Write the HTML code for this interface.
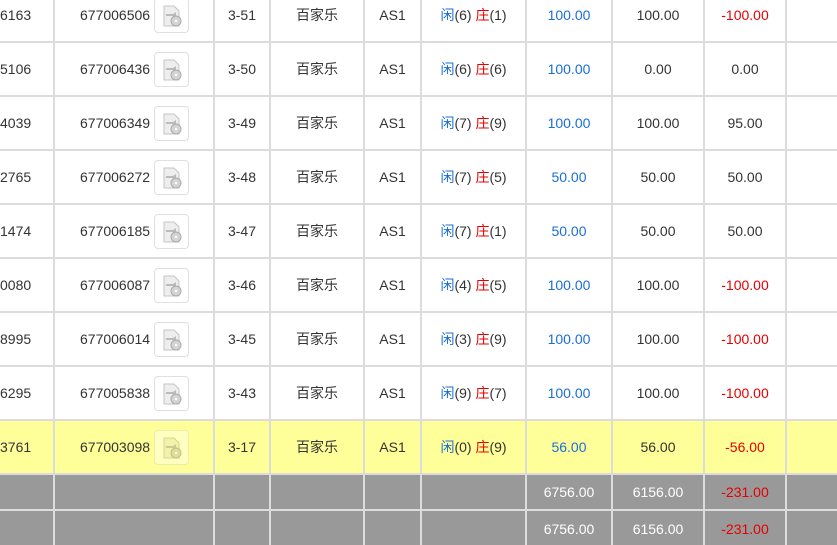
<!DOCTYPE html><html><head><meta charset="utf-8"><style>
body{margin:0;width:837px;height:543px;overflow:hidden;background:#fff;font-family:"Liberation Sans","Noto Sans CJK SC",sans-serif;font-size:14px;color:#333}
.wrap{position:absolute;top:-11px;left:0}
.r{display:flex;height:52px;border-bottom:2px solid #dcdcdc;line-height:52px}
.r>div{border-right:2px solid #dcdcdc;text-align:center;flex:none;white-space:nowrap;overflow:hidden}
.c0{width:53px;text-align:left!important}.c1{width:158px;position:relative}.c2{width:54px}.c3{width:92px}.c4{width:55px}.c5{width:103px}.c6{width:84px}.c7{width:90px}.c8{width:80px}.c9{width:50px;border-right:none!important}
.c1 span{position:absolute;left:25px}
.ic{position:absolute;left:99px;top:9px;width:33px;height:33px;border:1px solid #e0e0e0;border-radius:4px;background:rgba(255,255,255,.4)}
.b{color:#1a6ed8}.d{color:#e60000}
.y{background:#ffff99}
.g{background:#999;color:#fff;height:34px;line-height:34px}
.g2{height:34px;line-height:36px;border-bottom:none}
</style></head><body><div class="wrap">
<div class="r"><div class="c0">6163</div><div class="c1"><span>677006506</span><div class="ic"><svg width="33" height="33"><path d="M9 7h10l5 5v15H9z" fill="#eee" stroke="#c4c4c4"/><path d="M11 15h7l3-2v6l-3-2h-7z" fill="#bbb"/><circle cx="21" cy="22" r="5" fill="#d4d4d4" stroke="#aaa"/><circle cx="21" cy="22" r="1.2" fill="#fff"/></svg></div></div><div class="c2">3-51</div><div class="c3">百家乐</div><div class="c4">AS1</div><div class="c5"><span class="b">闲</span>(6) <span class="d">庄</span>(1)</div><div class="c6 b">100.00</div><div class="c7">100.00</div><div class="c8 d">-100.00</div><div class="c9"></div></div>
<div class="r"><div class="c0">5106</div><div class="c1"><span>677006436</span><div class="ic"><svg width="33" height="33"><path d="M9 7h10l5 5v15H9z" fill="#eee" stroke="#c4c4c4"/><path d="M11 15h7l3-2v6l-3-2h-7z" fill="#bbb"/><circle cx="21" cy="22" r="5" fill="#d4d4d4" stroke="#aaa"/><circle cx="21" cy="22" r="1.2" fill="#fff"/></svg></div></div><div class="c2">3-50</div><div class="c3">百家乐</div><div class="c4">AS1</div><div class="c5"><span class="b">闲</span>(6) <span class="d">庄</span>(6)</div><div class="c6 b">100.00</div><div class="c7">0.00</div><div class="c8">0.00</div><div class="c9"></div></div>
<div class="r"><div class="c0">4039</div><div class="c1"><span>677006349</span><div class="ic"><svg width="33" height="33"><path d="M9 7h10l5 5v15H9z" fill="#eee" stroke="#c4c4c4"/><path d="M11 15h7l3-2v6l-3-2h-7z" fill="#bbb"/><circle cx="21" cy="22" r="5" fill="#d4d4d4" stroke="#aaa"/><circle cx="21" cy="22" r="1.2" fill="#fff"/></svg></div></div><div class="c2">3-49</div><div class="c3">百家乐</div><div class="c4">AS1</div><div class="c5"><span class="b">闲</span>(7) <span class="d">庄</span>(9)</div><div class="c6 b">100.00</div><div class="c7">100.00</div><div class="c8">95.00</div><div class="c9"></div></div>
<div class="r"><div class="c0">2765</div><div class="c1"><span>677006272</span><div class="ic"><svg width="33" height="33"><path d="M9 7h10l5 5v15H9z" fill="#eee" stroke="#c4c4c4"/><path d="M11 15h7l3-2v6l-3-2h-7z" fill="#bbb"/><circle cx="21" cy="22" r="5" fill="#d4d4d4" stroke="#aaa"/><circle cx="21" cy="22" r="1.2" fill="#fff"/></svg></div></div><div class="c2">3-48</div><div class="c3">百家乐</div><div class="c4">AS1</div><div class="c5"><span class="b">闲</span>(7) <span class="d">庄</span>(5)</div><div class="c6 b">50.00</div><div class="c7">50.00</div><div class="c8">50.00</div><div class="c9"></div></div>
<div class="r"><div class="c0">1474</div><div class="c1"><span>677006185</span><div class="ic"><svg width="33" height="33"><path d="M9 7h10l5 5v15H9z" fill="#eee" stroke="#c4c4c4"/><path d="M11 15h7l3-2v6l-3-2h-7z" fill="#bbb"/><circle cx="21" cy="22" r="5" fill="#d4d4d4" stroke="#aaa"/><circle cx="21" cy="22" r="1.2" fill="#fff"/></svg></div></div><div class="c2">3-47</div><div class="c3">百家乐</div><div class="c4">AS1</div><div class="c5"><span class="b">闲</span>(7) <span class="d">庄</span>(1)</div><div class="c6 b">50.00</div><div class="c7">50.00</div><div class="c8">50.00</div><div class="c9"></div></div>
<div class="r"><div class="c0">0080</div><div class="c1"><span>677006087</span><div class="ic"><svg width="33" height="33"><path d="M9 7h10l5 5v15H9z" fill="#eee" stroke="#c4c4c4"/><path d="M11 15h7l3-2v6l-3-2h-7z" fill="#bbb"/><circle cx="21" cy="22" r="5" fill="#d4d4d4" stroke="#aaa"/><circle cx="21" cy="22" r="1.2" fill="#fff"/></svg></div></div><div class="c2">3-46</div><div class="c3">百家乐</div><div class="c4">AS1</div><div class="c5"><span class="b">闲</span>(4) <span class="d">庄</span>(5)</div><div class="c6 b">100.00</div><div class="c7">100.00</div><div class="c8 d">-100.00</div><div class="c9"></div></div>
<div class="r"><div class="c0">8995</div><div class="c1"><span>677006014</span><div class="ic"><svg width="33" height="33"><path d="M9 7h10l5 5v15H9z" fill="#eee" stroke="#c4c4c4"/><path d="M11 15h7l3-2v6l-3-2h-7z" fill="#bbb"/><circle cx="21" cy="22" r="5" fill="#d4d4d4" stroke="#aaa"/><circle cx="21" cy="22" r="1.2" fill="#fff"/></svg></div></div><div class="c2">3-45</div><div class="c3">百家乐</div><div class="c4">AS1</div><div class="c5"><span class="b">闲</span>(3) <span class="d">庄</span>(9)</div><div class="c6 b">100.00</div><div class="c7">100.00</div><div class="c8 d">-100.00</div><div class="c9"></div></div>
<div class="r"><div class="c0">6295</div><div class="c1"><span>677005838</span><div class="ic"><svg width="33" height="33"><path d="M9 7h10l5 5v15H9z" fill="#eee" stroke="#c4c4c4"/><path d="M11 15h7l3-2v6l-3-2h-7z" fill="#bbb"/><circle cx="21" cy="22" r="5" fill="#d4d4d4" stroke="#aaa"/><circle cx="21" cy="22" r="1.2" fill="#fff"/></svg></div></div><div class="c2">3-43</div><div class="c3">百家乐</div><div class="c4">AS1</div><div class="c5"><span class="b">闲</span>(9) <span class="d">庄</span>(7)</div><div class="c6 b">100.00</div><div class="c7">100.00</div><div class="c8 d">-100.00</div><div class="c9"></div></div>
<div class="r y"><div class="c0">3761</div><div class="c1"><span>677003098</span><div class="ic" style="border-color:#eeeeaa"><svg width="33" height="33"><path d="M9 7h10l5 5v15H9z" fill="#f2f2aa" stroke="#d6d690"/><path d="M11 15h7l3-2v6l-3-2h-7z" fill="#cccc90"/><circle cx="21" cy="22" r="5" fill="#dddda0" stroke="#c0c080"/><circle cx="21" cy="22" r="1.2" fill="#ffffcc"/></svg></div></div><div class="c2">3-17</div><div class="c3">百家乐</div><div class="c4">AS1</div><div class="c5"><span class="b">闲</span>(0) <span class="d">庄</span>(9)</div><div class="c6 b">56.00</div><div class="c7">56.00</div><div class="c8 d">-56.00</div><div class="c9"></div></div>
<div class="r g"><div class="c0"></div><div class="c1"></div><div class="c2"></div><div class="c3"></div><div class="c4"></div><div class="c5"></div><div class="c6">6756.00</div><div class="c7">6156.00</div><div class="c8 d">-231.00</div><div class="c9"></div></div>
<div class="r g g2"><div class="c0"></div><div class="c1"></div><div class="c2"></div><div class="c3"></div><div class="c4"></div><div class="c5"></div><div class="c6">6756.00</div><div class="c7">6156.00</div><div class="c8 d">-231.00</div><div class="c9"></div></div>
</div></body></html>
